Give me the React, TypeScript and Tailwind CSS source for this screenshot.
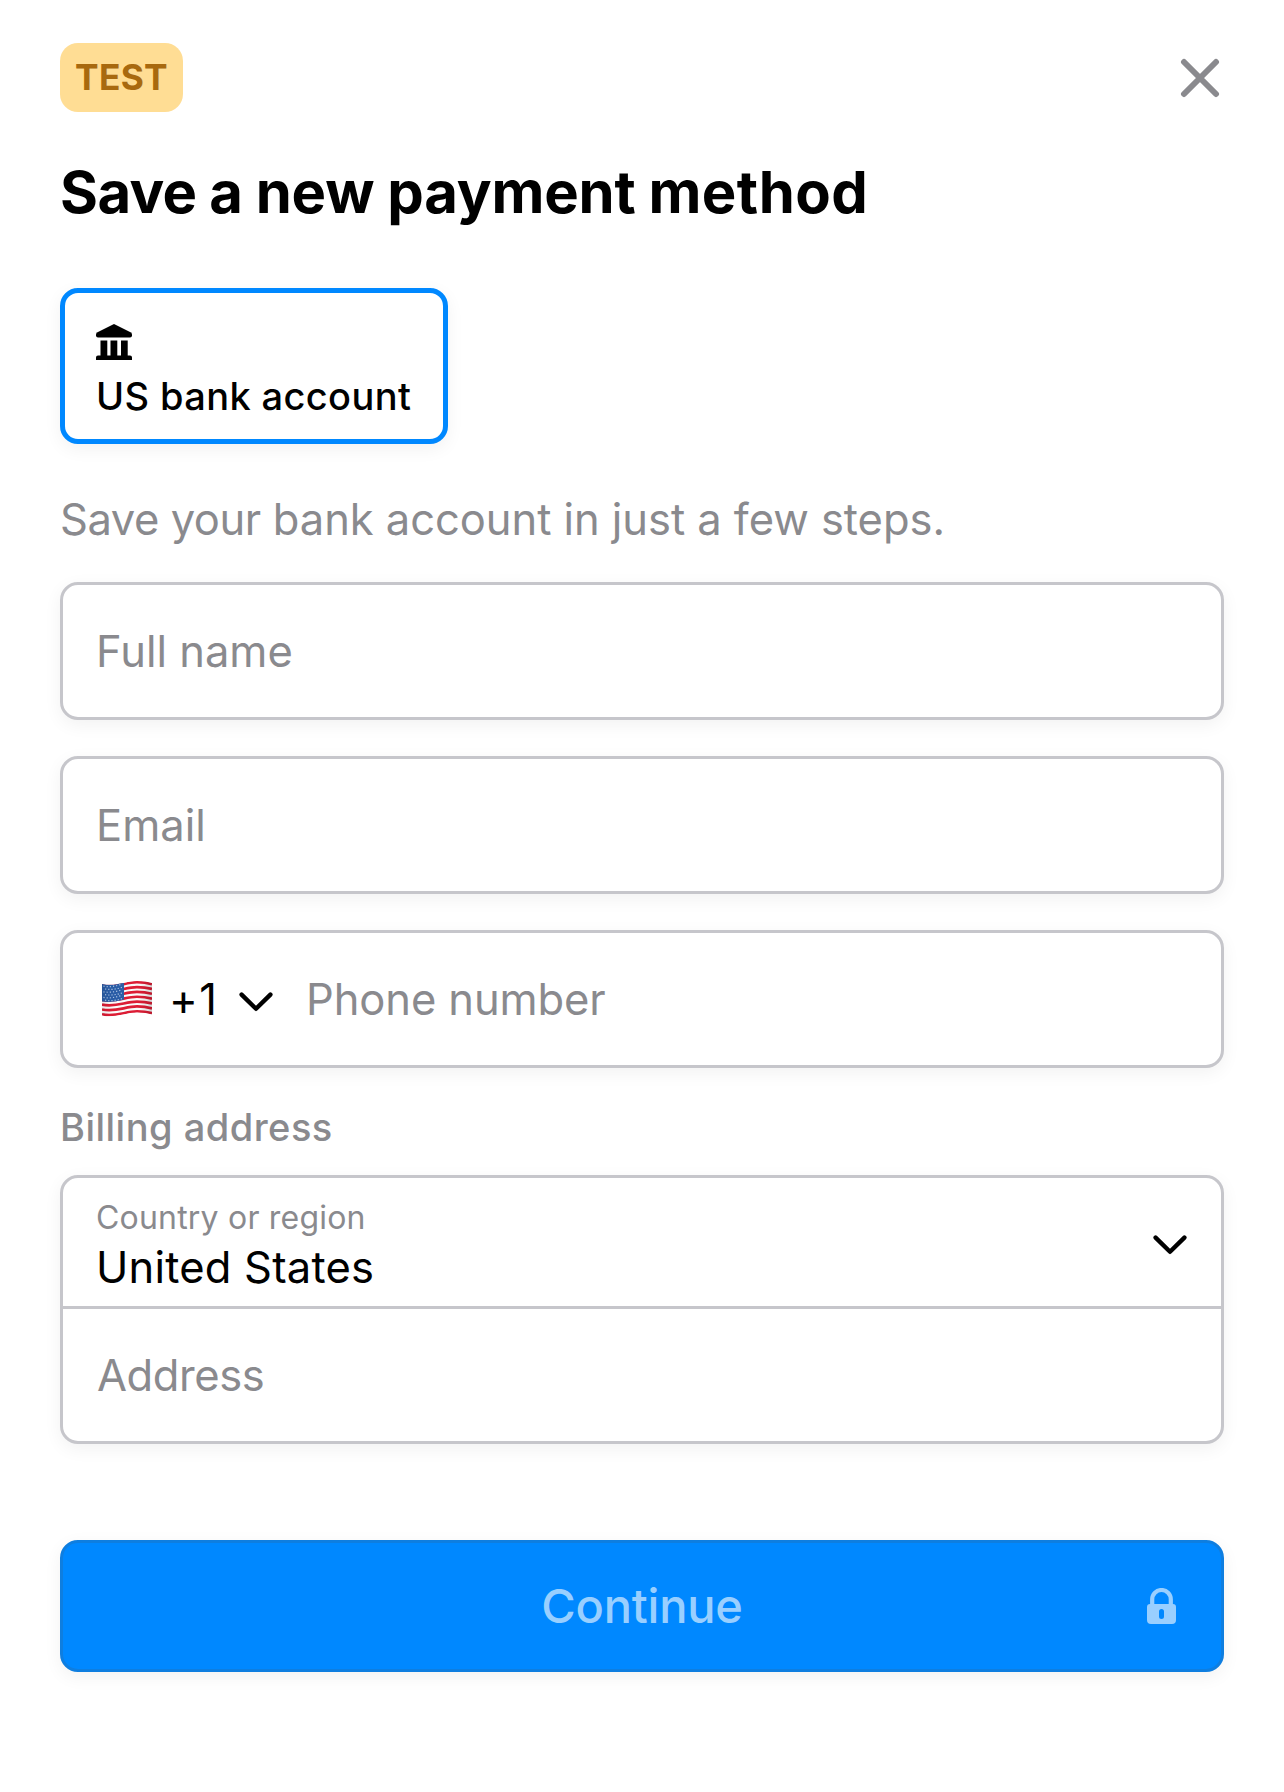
import React from "react";

const shadow = "shadow-[0_5px_18px_rgba(0,0,0,0.055)]";
const field = `flex h-[138px] items-center rounded-[18px] border-[3px] border-[#c6c6cb] bg-white ${shadow}`;

function T({ children, className = "" }: { children: string; className?: string }) {
  return <span className={`block whitespace-nowrap ${className}`}>{children}</span>;
}

function Chevron() {
  return (
    <svg width="34" height="22" viewBox="0 0 34 22" fill="none" className="shrink-0">
      <path d="M2.6 3.6 17 17.8 31.4 3.6" stroke="black" strokeWidth="4.4" strokeLinecap="round" strokeLinejoin="round" />
    </svg>
  );
}

const stripes = [0, 1, 2, 3, 4, 5, 6];
const starRows = [0, 1, 2, 3, 4, 5];

function Flag() {
  return (
    <svg width="50" height="37" viewBox="0 0 50 37" className="shrink-0">
      <defs>
        <clipPath id="flag-shape">
          <path d="M0 3 C14 6 23 0 35 0 C41 0 46 .8 50 1.9 V33.4 C46 32.3 41 31.5 35 31.5 C23 31.5 14 37.5 0 34.5 Z" />
        </clipPath>
        <linearGradient id="flag-shade" x1="0" x2="1" y1="0" y2="0">
          <stop offset="0" stopColor="#000" stopOpacity="0.08" />
          <stop offset="0.2" stopColor="#000" stopOpacity="0" />
          <stop offset="0.75" stopColor="#000" stopOpacity="0" />
          <stop offset="1" stopColor="#000" stopOpacity="0.16" />
        </linearGradient>
      </defs>
      <g clipPath="url(#flag-shape)">
        <rect width="50" height="37" fill="#fafafa" />
        {stripes.map((i) => (
          <path
            key={i}
            transform={`translate(0 ${1.2 + i * 4.85})`}
            d="M0 3 C14 6 23 0 35 0 C41 0 46 .8 50 1.9"
            fill="none"
            stroke="#dc1c34"
            strokeWidth="2.7"
          />
        ))}
        <path d="M0 2 C8 5 15 3.4 22 0 V18.6 C15 20.6 8 21.6 0 20.6 Z" fill="#2a5da6" />
        {starRows.map((i) => (
          <path
            key={i}
            transform={`translate(${i % 2 ? 1.6 : 0} ${i * 2.8})`}
            d="M1.4 5.2 C8 6.4 14 5 20.4 3"
            fill="none"
            stroke="#a9c2e2"
            strokeWidth="1.2"
            strokeDasharray="1.2 2"
          />
        ))}
        <rect width="50" height="37" fill="url(#flag-shade)" />
      </g>
    </svg>
  );
}

function Bank() {
  return (
    <svg width="36" height="36" viewBox="0 0 36 36" fill="black">
      <path d="M18 0 34.5 8.2Q36 9 36 10.4V11.4Q36 13.5 34 13.5H2Q0 13.5 0 11.4V10.4Q0 9 1.5 8.2Z" />
      <path d="M4.5 16.5H11.3V31.5H14.5V16.5H21.3V31.5H25V16.5H31.7V31.5H34Q36 31.5 36 33.5V36H0V33.5Q0 31.5 2 31.5H4.5Z" />
    </svg>
  );
}

export default function App() {
  return (
    <main className="flex h-[1792px] w-[1284px] flex-col bg-white px-[60px] pt-[43px] font-['Inter',sans-serif] text-black">
      <header className="flex h-[69px] items-center justify-between">
        <div className="flex h-[69px] w-[123px] items-center justify-center rounded-[18px] bg-[#ffdd94]">
          <T className="text-[35.3px] font-bold leading-[44px] tracking-[0.3px] text-[#a8690f]">TEST</T>
        </div>
        <svg width="40" height="40" viewBox="0 0 40 40" fill="none" className="mr-1">
          <path d="M4 4 36 36M36 4 4 36" stroke="#8a8a8e" strokeWidth="6" strokeLinecap="round" />
        </svg>
      </header>

      <h1 className="mt-[44px] h-[72px] whitespace-nowrap text-[58px] font-bold leading-[72px] tracking-[-0.15px] [word-spacing:-0.8px]">
        <span className="tracking-[-0.6px]">Save</span> a new payment <span className="tracking-[0.45px]">method</span>
      </h1>

      <div className={`mt-[60px] flex h-[156px] w-[388px] flex-col rounded-[18px] border-[5px] border-[#0088ff] bg-white pl-[31px] pt-[31px] ${shadow}`}>
        <Bank />
        <T className="mt-3 text-[38px] font-medium leading-[48px] tracking-[0.38px]">US bank account</T>
      </div>

      <p className="mt-[47px] h-[56px] whitespace-nowrap text-[43.5px] leading-[56px] tracking-[-0.05px] text-[#8a8a8e]">
        <span className="tracking-[-0.45px]">Save your</span> bank account in just a few steps.
      </p>

      <div className="mt-[35px] flex flex-col gap-[36px] text-[43.5px] leading-[56px] text-[#8a8a8e]">
        <div className={`${field} pl-[33px]`}>
          <T>Full name</T>
        </div>
        <div className={`${field} pl-[33px]`}>
          <T>Email</T>
        </div>
        <div className={`${field} pl-[39px]`}>
          <Flag />
          <T className="ml-[17px] w-[50px] tracking-[1.5px] text-black">+1</T>
          <div className="ml-[20px] mr-[33px] pt-[5px]">
            <Chevron />
          </div>
          <T className="tracking-[-0.1px]">Phone number</T>
        </div>
      </div>

      <T className="mt-[35px] text-[38px] font-medium leading-[48px] tracking-[0.48px] text-[#8a8a8e]">Billing address</T>

      <div className={`mt-[24px] flex h-[269px] shrink-0 flex-col rounded-[18px] border-[3px] border-[#c6c6cb] bg-white ${shadow}`}>
        <div className="flex h-[131px] items-center justify-between border-b-[3px] border-[#c6c6cb] pl-[33px] pr-[34px] pt-[8px]">
          <div>
            <T className="text-[32px] leading-[42px] tracking-[0.2px] text-[#8a8a8e]">Country or region</T>
            <T className="text-[43.5px] leading-[56px] tracking-[0.2px]">United States</T>
          </div>
          <div className="pb-[2px]">
            <Chevron />
          </div>
        </div>
        <div className="flex h-[132px] items-center pl-[34px] text-[#8a8a8e]">
          <T className="text-[43.5px] leading-[56px] tracking-[-0.4px]">Address</T>
        </div>
      </div>

      <button className={`relative mt-[96px] flex h-[132px] shrink-0 items-center justify-center rounded-[18px] border-[3px] border-[#0e7ee0] bg-[#0088ff] text-[#99cfff] ${shadow}`}>
        <T className="text-[47px] font-medium leading-[60px] tracking-[-0.2px]">Continue</T>
        <svg width="29" height="36" viewBox="0 0 29 36" className="absolute right-[45px] top-[45px]">
          <path d="M5.2 17V11.3a9.3 9.3 0 0 1 18.6 0V17" fill="none" stroke="#99cfff" strokeWidth="4.2" />
          <path fillRule="evenodd" d="M3 16H26Q29 16 29 19V32Q29 36 25 36H4Q0 36 0 32V19Q0 16 3 16ZM14.5 21A2.5 2.5 0 0 0 12 23.5V28.5A2.5 2.5 0 0 0 17 28.5V23.5A2.5 2.5 0 0 0 14.5 21Z" fill="#99cfff" />
        </svg>
      </button>
    </main>
  );
}
